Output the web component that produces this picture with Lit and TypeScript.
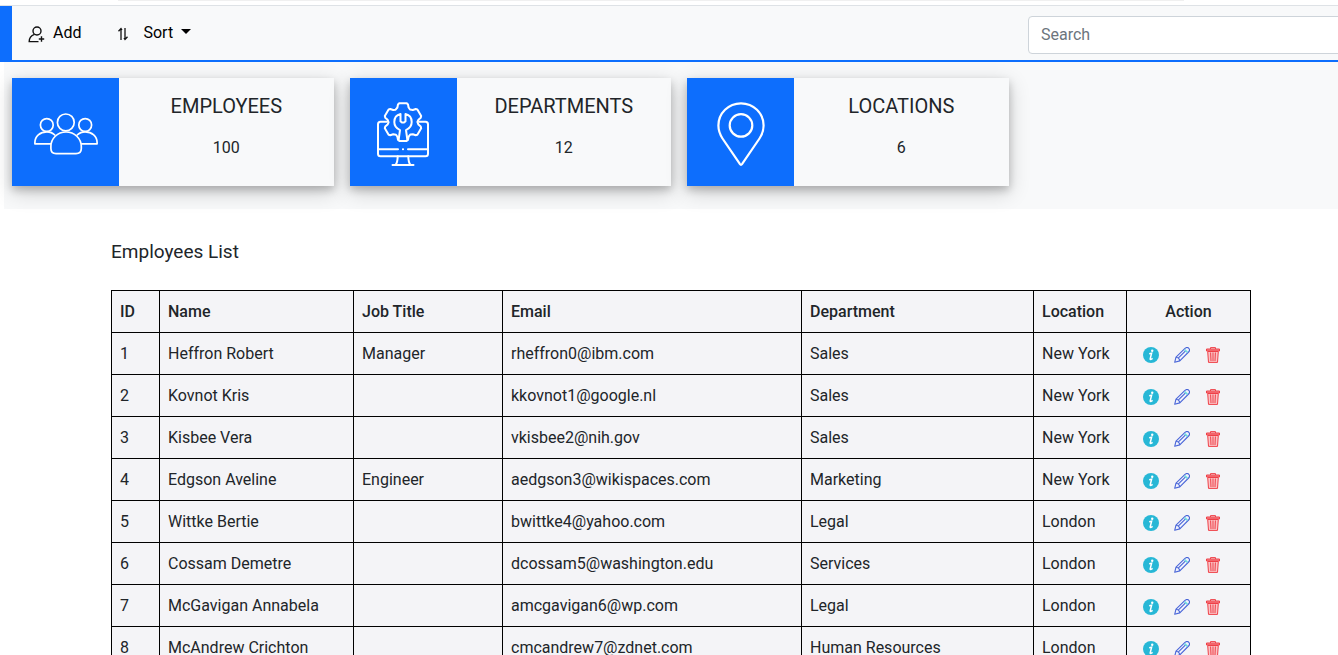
import { LitElement, html, css, svg } from "lit";
import { customElement, property } from "lit/decorators.js";

interface Employee {
  id: number;
  name: string;
  job: string;
  email: string;
  department: string;
  location: string;
}

const EMPLOYEES: Employee[] = [
  { id: 1, name: "Heffron Robert", job: "Manager", email: "rheffron0@ibm.com", department: "Sales", location: "New York" },
  { id: 2, name: "Kovnot Kris", job: "", email: "kkovnot1@google.nl", department: "Sales", location: "New York" },
  { id: 3, name: "Kisbee Vera", job: "", email: "vkisbee2@nih.gov", department: "Sales", location: "New York" },
  { id: 4, name: "Edgson Aveline", job: "Engineer", email: "aedgson3@wikispaces.com", department: "Marketing", location: "New York" },
  { id: 5, name: "Wittke Bertie", job: "", email: "bwittke4@yahoo.com", department: "Legal", location: "London" },
  { id: 6, name: "Cossam Demetre", job: "", email: "dcossam5@washington.edu", department: "Services", location: "London" },
  { id: 7, name: "McGavigan Annabela", job: "", email: "amcgavigan6@wp.com", department: "Legal", location: "London" },
  { id: 8, name: "McAndrew Crichton", job: "", email: "cmcandrew7@zdnet.com", department: "Human Resources", location: "London" },
];

// Outline of a six-toothed gear centred on (cx, cy).
function gearPath(cx: number, cy: number): string {
  const tooth = [[-5.6, -14.6], [-5, -17.6], [-3.8, -18.8], [3.8, -18.8], [5, -17.6], [5.6, -14.6], [7.0, -12.6]];
  const points: string[] = [];
  for (let i = 0; i < 6; i++) {
    const a = (i * Math.PI) / 3;
    for (const [x, y] of tooth) {
      const px = cx + x * Math.cos(a) - y * Math.sin(a);
      const py = cy + x * Math.sin(a) + y * Math.cos(a);
      points.push(`${px.toFixed(2)} ${py.toFixed(2)}`);
    }
  }
  return `M${points.join("L")}Z`;
}

const PEOPLE = svg`
  <g stroke-width="1.7">
    <circle cx="31.8" cy="20.4" r="8.4"/>
    <circle cx="12.8" cy="23" r="6.4"/>
    <circle cx="51.2" cy="23" r="6.4"/>
    <path d="M32 30C23.500 30 16.900 36.500 16.900 44.500V46.500C16.900 49.800 19 51.600 22 51.600H42C45 51.600 47.300 49.800 47.300 46.500V44.500C47.300 36.500 40.500 30 32 30Z"/>
    <path d="M16.500 41.800H.9V40.500C.9 34.500 6 29.800 12.800 29.800C15.800 29.800 18.600 30.700 20.800 33"/>
    <path d="M47.500 41.800H63.100V40.500C63.100 34.500 58 29.800 51.200 29.800C48.200 29.800 45.400 30.700 43.200 33"/>
  </g>`;

const MONITOR = svg`
  <g stroke-width="2">
    <path d=${gearPath(32, 20.1)}/>
    <path d="M29.500 12C25.800 12.800 23.300 16 23.300 20.100C23.300 23.600 25.200 26.400 29 28.200L27.600 38M34.500 12C38.200 12.800 40.700 16 40.700 20.100C40.700 23.600 38.800 26.400 35 28.200L36.400 38M29.500 12V19.200L30.700 20.400H33.300L34.500 19.200V12"/>
    <path d="M16 19.800H9.500C8 19.800 7 20.800 7 22.300V51.800C7 53.300 8 54.300 9.500 54.300H54.500C56 54.300 57 53.300 57 51.800V22.300C57 20.800 56 19.800 54.500 19.800H48"/>
    <path d="M7 47.300H27M37 47.300H57M31.900 47.300H32.100M26.700 54.300C26.600 59 26 61.500 24.500 63M37.300 54.300C37.400 59 38 61.500 39.500 63M21.500 63H42.500"/>
  </g>`;

const PIN = svg`
  <g stroke-width="2.200">
    <circle cx="32" cy="23.400" r="11.300"/>
    <path d="M32 1.300C19.500 1.300 9.400 11.200 9.400 23.600C9.400 28.500 10.900 32.500 13.500 36.500L31 62.200Q32 63.600 33 62.200L50.500 36.500C53.100 32.500 54.600 28.500 54.600 23.600C54.600 11.200 44.500 1.300 32 1.300Z"/>
  </g>`;

@customElement("stat-card")
export class StatCard extends LitElement {
  @property() heading = "";
  @property({ type: Number }) value = 0;
  @property({ attribute: false }) icon: unknown = null;

  static styles = css`
    :host {
      display: grid;
      grid-template-columns: 1fr 2fr;
      min-height: 108px;
      background: #f8f9fa;
      box-shadow: 0 4px 8px 0 rgba(0, 0, 0, 0.2), 0 6px 20px 0 rgba(0, 0, 0, 0.19);
    }
    .icon {
      display: flex;
      align-items: center;
      justify-content: center;
      padding-top: 4px;
      background: #0d6efd;
    }
    svg {
      width: 64px;
      height: 64px;
      fill: none;
      stroke: #fff;
      stroke-linecap: round;
      stroke-linejoin: round;
    }
    .body {
      padding: 16px;
      text-align: center;
    }
    h5 {
      margin: 0 0 18px;
      font-size: 20px;
      font-weight: 400;
      line-height: 24px;
    }
    p {
      margin: 0;
      line-height: 24px;
    }
  `;

  render() {
    return html`
      <div class="icon"><svg viewBox="0 0 64 64" aria-hidden="true">${this.icon}</svg></div>
      <div class="body">
        <h5>${this.heading}</h5>
        <p>${this.value}</p>
      </div>
    `;
  }
}

@customElement("app-root")
export class AppRoot extends LitElement {
  static styles = css`
    :host {
      display: block;
      height: 100vh;
      overflow: hidden;
      background: #fff;
      color: #212529;
      font-family: Roboto, "Liberation Sans", sans-serif;
      font-size: 16px;
      line-height: 24px;
    }
    *, *::before, *::after { box-sizing: border-box; }
    button {
      padding: 0;
      border: 0;
      background: none;
      color: inherit;
      font: inherit;
      cursor: pointer;
    }
    .edge {
      height: 6px;
      padding: 0 154px 0 118px;
      border-bottom: 1px solid #dee2e6;
    }
    .edge-line {
      height: 1px;
      background: #f0f0f0;
    }
    .toolbar {
      display: flex;
      justify-content: space-between;
      width: calc(100% + 12px);
      height: 56px;
      padding-left: 16px;
      border-left: 12px solid #0d6efd;
      background: #f8f9fa;
      box-shadow: inset 0 -2px #0d6efd;
      color: #000;
    }
    .tools {
      display: flex;
      align-items: center;
      gap: 36px;
      padding-bottom: 3px;
    }
    .tool {
      display: flex;
      align-items: center;
      gap: 8px;
    }
    .tool svg {
      width: 17px;
      height: 17px;
      margin-top: 3px;
      fill: none;
      stroke: #111;
    }
    .sort { gap: 12px; }
    .sort svg {
      width: 14px;
      height: 14px;
    }
    .caret {
      margin: -3px 0 0 -4px;
      border: 5px solid transparent;
      border-top-color: #000;
      border-bottom: 0;
    }
    .search {
      flex: 0 0 322px;
      padding-top: 10px;
    }
    .search input {
      width: 100%;
      height: 38px;
      padding: 5px 12px 7px;
      border: 1px solid #ced4da;
      border-radius: 4px;
      background: #fff;
      font: inherit;
      line-height: 24px;
    }
    .search input::placeholder { color: #6c757d; opacity: 1; }
    .stats {
      display: grid;
      grid-template-columns: repeat(4, 1fr);
      gap: 16px;
      width: calc(100% + 12px);
      margin-left: 4px;
      padding: 16px 8px 23px;
      background: #f8f9fa;
    }
    .main { padding: 31px 0 0 24px; }
    .content {
      max-width: 1140px;
      margin: 0 auto;
    }
    h2 {
      margin: 0 0 26px;
      font-size: 19px;
      font-weight: 400;
      line-height: 24px;
    }
    table {
      width: 100%;
      border-collapse: collapse;
      table-layout: fixed;
      background: #f4f4f7;
    }
    th, td {
      height: 42px;
      padding: 8px;
      border: 1px solid #000;
      text-align: left;
      white-space: nowrap;
    }
    th { font-weight: 500; }
    .c-id { width: 48px; }
    .c-name { width: 194px; }
    .c-job { width: 149px; }
    .c-email { width: 299px; }
    .c-location { width: 93px; }
    .c-action { width: 124px; }
    .head-action { text-align: center; }
    .actions {
      display: flex;
      gap: 15px;
      padding: 3px 8px 0;
    }
    .actions button { display: flex; }
    .actions svg {
      width: 16px;
      height: 16px;
    }
  `;

  private renderRow(e: Employee) {
    return html`
      <tr>
        <td>${e.id}</td>
        <td>${e.name}</td>
        <td>${e.job}</td>
        <td>${e.email}</td>
        <td>${e.department}</td>
        <td>${e.location}</td>
        <td>
          <div class="actions">
            <button aria-label="Details of ${e.name}">
              <svg viewBox="0 0 16 16">
                <circle cx="8" cy="8" r="8" fill="#27b7d6" />
                <circle cx="9.200" cy="3.700" r="1.200" fill="#fff" />
                <path d="M6.200 6.800L8.600 6.300L7.200 11.800C7 12.900 8 12.700 9.600 11.400" fill="none" stroke="#fff" stroke-width="1.500" />
              </svg>
            </button>
            <button aria-label="Edit ${e.name}">
              <svg viewBox="0 0 16 16" fill="none" stroke="#4a66d8" stroke-width="1.100" stroke-linejoin="round">
                <path d="M.7 15.300L2 10.200L11 1.400C12.200 .3 13.800 .3 14.800 1.300C15.800 2.300 15.800 3.800 14.600 5L5.800 13.900Z" fill="#f0f2fc" />
                <path d="M2 10.200C3.800 10.400 5.600 12.200 5.800 13.900M4.200 11.200L11.800 3.700" />
                <path d="M10.600 2.600L13.500 5.400" stroke="#6fe0de" stroke-width="1.500" />
              </svg>
            </button>
            <button aria-label="Delete ${e.name}">
              <svg viewBox="0 0 16 16" fill="none" stroke="#ef4048">
                <path d="M5.500 2V.6H10.500V2" />
                <path d="M1.500 2H14.500V4H1.500Z" fill="#f58a8e" />
                <path d="M2.700 4.500L3.500 15.400H12.500L13.300 4.500Z" fill="#fbc3c6" />
                <path d="M5.600 5.500L6 14M8 5.500V14M10.400 5.500L10 14" />
              </svg>
            </button>
          </div>
        </td>
      </tr>
    `;
  }

  render() {
    return html`
      <div class="edge"><div class="edge-line"></div></div>
      <nav class="toolbar">
        <div class="tools">
          <button class="tool">
            <svg viewBox="0 0 17 17" stroke-width="1.400">
              <circle cx="9" cy="5" r="4" />
              <path d="M6.500 8.300C3 9.500 1.200 12 1.200 15.600H10.500M13.500 10.300V15.700M10.800 13H16.200" />
            </svg>
            Add
          </button>
          <button class="tool sort">
            <svg viewBox="0 0 14 14" stroke-width="1.300">
              <path d="M4 13V1.500M1.500 4.200L4 1.500L5 3M8 1V12.500M7 11L8 12.500L10.500 9.800" />
            </svg>
            Sort
            <span class="caret"></span>
          </button>
        </div>
        <div class="search"><input type="search" placeholder="Search" aria-label="Search" /></div>
      </nav>
      <section class="stats">
        <stat-card heading="EMPLOYEES" .value=${100} .icon=${PEOPLE}></stat-card>
        <stat-card heading="DEPARTMENTS" .value=${12} .icon=${MONITOR}></stat-card>
        <stat-card heading="LOCATIONS" .value=${6} .icon=${PIN}></stat-card>
      </section>
      <main class="main">
        <div class="content">
          <h2>Employees List</h2>
          <table>
            <colgroup>
              <col class="c-id" /><col class="c-name" /><col class="c-job" /><col class="c-email" />
              <col /><col class="c-location" /><col class="c-action" />
            </colgroup>
            <thead>
              <tr>
                <th>ID</th><th>Name</th><th>Job Title</th><th>Email</th>
                <th>Department</th><th>Location</th><th class="head-action">Action</th>
              </tr>
            </thead>
            <tbody>${EMPLOYEES.map((e) => this.renderRow(e))}</tbody>
          </table>
        </div>
      </main>
    `;
  }
}
